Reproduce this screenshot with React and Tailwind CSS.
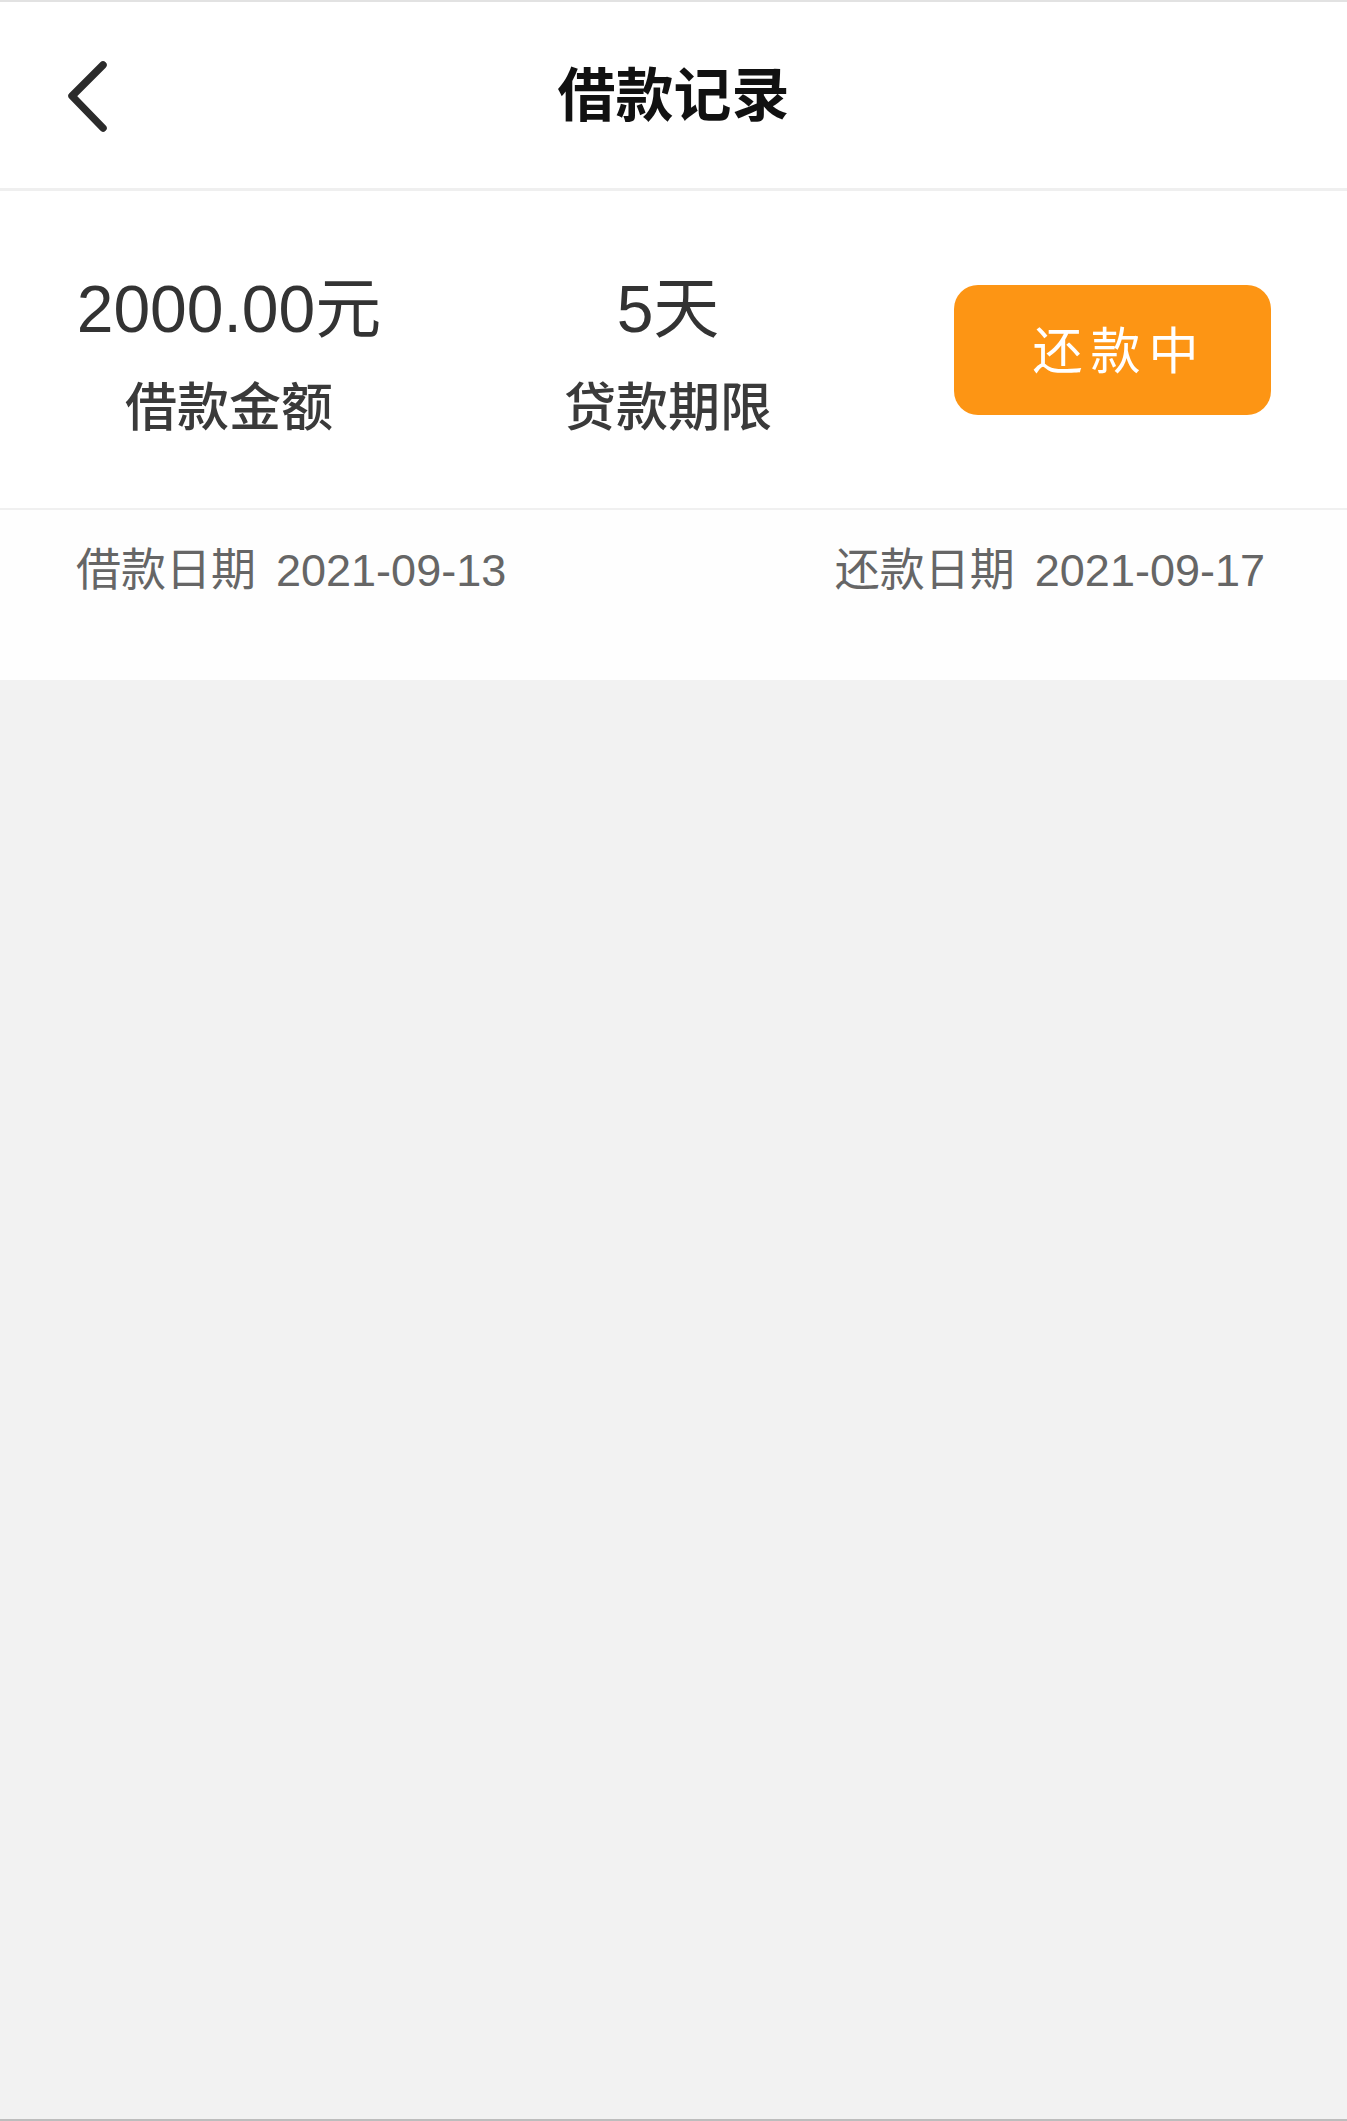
import React from "react";

const font = { fontFamily: '"Liberation Sans", "Noto Sans CJK SC", sans-serif' };

const BackIcon = () => (
  <svg width="50" height="80" viewBox="0 0 50 80" fill="none">
    <path
      d="M41 9 L10 40 L41 72"
      stroke="#2b2b2b"
      strokeWidth="7.5"
      strokeLinecap="round"
      strokeLinejoin="round"
    />
  </svg>
);

const Stat = ({ value, label, width }) => (
  <div className={`flex flex-col items-center pt-[12px] ${width}`}>
    <div className="text-[66px] leading-[66px] text-[#333]">{value}</div>
    <div className="mt-[38px] text-[52px] leading-[56px] font-medium text-[#3a3a3a]">
      {label}
    </div>
  </div>
);

export default function App() {
  return (
    <div className="min-h-[2121px] flex flex-col bg-[#f2f2f2]" style={font}>
      <div className="h-[2px] bg-[#e2e2e2]" />

      {/* header */}
      <div className="relative h-[189px] flex items-center justify-center bg-white border-b-[3px] border-[#efefef]">
        <div className="absolute left-[62px] top-[54px]">
          <BackIcon />
        </div>
        <div className="text-[58px] font-bold text-[#111]">借款记录</div>
      </div>

      {/* loan summary */}
      <div className="h-[319px] flex items-center bg-white border-b-2 border-[#f0f0f0]">
        <Stat value="2000.00元" label="借款金额" width="w-[458px]" />
        <Stat value="5天" label="贷款期限" width="w-[420px]" />
        <div className="flex-1 flex justify-center">
          <button className="w-[317px] h-[130px] rounded-[24px] bg-[#fd9514] text-white text-[50px] tracking-[8px] pl-[14px] pt-[6px]">
            还款中
          </button>
        </div>
      </div>

      {/* dates */}
      <div className="h-[170px] flex justify-between items-start pl-[76px] pr-[82px] pt-[33px] bg-[#fefefe] text-[45px] leading-[56px] text-[#666]">
        <div>
          借款日期<span className="ml-[20px]">2021-09-13</span>
        </div>
        <div>
          还款日期<span className="ml-[20px]">2021-09-17</span>
        </div>
      </div>

      <div className="flex-1" />
      <div className="h-[2px] bg-[#bdbdbd]" />
    </div>
  );
}
